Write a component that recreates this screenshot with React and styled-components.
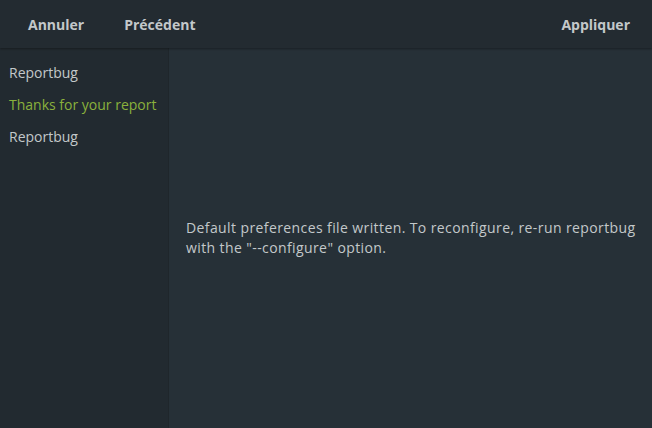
import * as React from "react";
import styled, { createGlobalStyle } from "styled-components";

const GlobalStyle = createGlobalStyle`
	html, body {
		margin: 0;
		padding: 0;
		background: #263037;
	}
	body {
		font-family: "Open Sans", "Noto Sans", sans-serif;
	}
`;

const WindowStyle = styled.div`
	width: 652px;
	height: 428px;
	display: flex;
	flex-direction: column;
	background: #263037;
	overflow: hidden;
`;

const HeaderBarStyle = styled.div`
	height: 48px;
	flex-shrink: 0;
	display: flex;
	align-items: center;
	padding: 0 2px 0 8px;
	background: #232b31;
	box-shadow: 0 1px 2px rgba(0, 0, 0, 0.35);
	position: relative;
	z-index: 1;
`;

const HeaderButton = styled.button`
	border: none;
	background: transparent;
	font-family: inherit;
	font-size: 14px;
	font-weight: 700;
	color: #c3c8ca;
	padding: 0 20px;
	height: 34px;
	margin-left: ${({ $push }) => ($push ? "auto" : "0")};
`;

const BodyStyle = styled.div`
	flex: 1;
	display: flex;
	min-height: 0;
`;

const SidebarStyle = styled.div`
	width: 168px;
	flex-shrink: 0;
	background: #222a30;
	border-right: 1px solid #1f262b;
	padding-top: 9px;
`;

const SidebarItem = styled.div`
	height: 32px;
	line-height: 32px;
	padding-left: 9px;
	font-size: 14px;
	color: ${({ $active }) => ($active ? "#8ab13c" : "#c3c8ca")};
	white-space: nowrap;
`;

const ContentStyle = styled.div`
	flex: 1;
	display: flex;
	align-items: center;
	padding: 0 0 0 17px;
`;

const MessageStyle = styled.p`
	margin: 0;
	font-size: 14px;
	letter-spacing: 0.4px;
	line-height: 20px;
	color: #c3c8ca;
	white-space: nowrap;
`;

const App = () => {
	return (
		<>
			<GlobalStyle />
			<WindowStyle>
				<HeaderBarStyle>
					<HeaderButton>Annuler</HeaderButton>
					<HeaderButton>Précédent</HeaderButton>
					<HeaderButton $push>Appliquer</HeaderButton>
				</HeaderBarStyle>
				<BodyStyle>
					<SidebarStyle>
						<SidebarItem>Reportbug</SidebarItem>
						<SidebarItem $active>Thanks for your report</SidebarItem>
						<SidebarItem>Reportbug</SidebarItem>
					</SidebarStyle>
					<ContentStyle>
						<MessageStyle>
							Default preferences file written. To reconfigure, re-run reportbug
							<br />
							with the "--configure" option.
						</MessageStyle>
					</ContentStyle>
				</BodyStyle>
			</WindowStyle>
		</>
	);
};

export default App;
